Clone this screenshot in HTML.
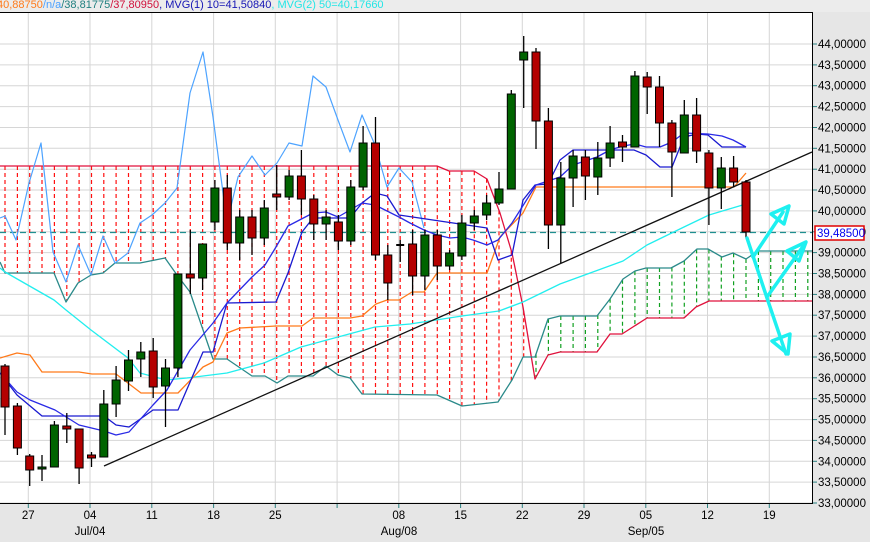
<!DOCTYPE html>
<html><head><meta charset="utf-8">
<style>
html,body{margin:0;padding:0;background:#e6e6e6;}
body{width:870px;height:542px;overflow:hidden;position:relative;font-family:"Liberation Sans",sans-serif;}
#hdr{position:absolute;left:-3px;top:-1px;font-size:11px;white-space:nowrap;line-height:13px;}
svg{position:absolute;left:0;top:0;}
</style></head>
<body>
<svg id="s" width="870" height="542" xmlns="http://www.w3.org/2000/svg" font-family="Liberation Sans, sans-serif">
<rect x="0" y="0" width="870" height="542" fill="#e6e6e6"/>
<rect x="0" y="0" width="870" height="12" fill="#ececec"/>
<rect x="0" y="13" width="812" height="490" fill="#ffffff"/>
<g id="grid" stroke="#d6d6d6" stroke-width="1"></g>
<g id="cloud"></g>
<g id="lines" fill="none" stroke-linejoin="round"></g>
<g id="candles"></g>
<g id="arrows" fill="none" stroke="#1ef0f0" stroke-width="3.5" stroke-linejoin="round" stroke-linecap="round">
<polyline points="747,238 757,268 767,298 786,354"/>
<polyline points="753,257 783,212"/>
<polygon points="771,214 789,206 784,224"/>
<polyline points="767,297 804,245"/>
<polygon points="787,251 806,242 799,261"/>
<polygon points="772,341 790,334 788,354"/>
</g>
<line x1="0" y1="12.5" x2="812" y2="12.5" stroke="#000"/>
<line x1="812.5" y1="12" x2="812.5" y2="503" stroke="#000"/>
<line x1="0" y1="503.5" x2="813" y2="503.5" stroke="#000"/>
<g id="axis" font-size="11.5" fill="#000"></g>
<rect x="815" y="226" width="49" height="14" fill="#fff" stroke="#e00000" stroke-width="1.5"/>
<text x="817" y="237" font-size="11.5" fill="#0000ee">39,48500</text>
</svg>
<div id="hdr"><span style="color:#ff7a1a">40,88750</span><span style="color:#4aa0ff">/n/a</span><span style="color:#1f7f7f">/38,81775</span><span style="color:#d0103a">/37,80950</span><span style="color:#1414b4">, MVG(1) 10=41,50840</span><span style="color:#22e6e6">, MVG(2) 50=40,17660</span></div>
<script>
var NS="http://www.w3.org/2000/svg";
function el(p,t,a){var e=document.createElementNS(NS,t);for(var k in a)e.setAttribute(k,a[k]);p.appendChild(e);return e;}
var g=document.getElementById('grid'),ax=document.getElementById('axis');
for(var k=0;k<=22;k++){var y=44+k*20.864;
 el(g,'line',{x1:0,y1:y.toFixed(1),x2:812,y2:y.toFixed(1)});
 el(ax,'line',{x1:813,y1:y.toFixed(1),x2:817,y2:y.toFixed(1),stroke:'#2a8080'});
 var v=(44-k*0.5).toFixed(5).replace('.',',');
 var t=el(ax,'text',{x:818,y:(y+4).toFixed(1)});t.textContent=v;
}
var days=["27","04","11","18","25","","08","15","22","29","05","12","19"];
for(var k=0;k<13;k++){var x=28.3+61.75*k;
 el(g,'line',{x1:x.toFixed(1),y1:13,x2:x.toFixed(1),y2:503});
 el(ax,'line',{x1:x.toFixed(1),y1:504,x2:x.toFixed(1),y2:508,stroke:'#2a8080'});
 if(days[k]){var t=el(ax,'text',{x:x.toFixed(1),y:519,'text-anchor':'middle'});t.textContent=days[k];}
}
[["Jul/04",90],["Aug/08",399],["Sep/05",646]].forEach(function(m){var t=el(ax,'text',{x:m[1],y:535,'text-anchor':'middle'});t.textContent=m[0];});
function interp(P,x){for(var i=0;i<P.length-1;i++){if(x>=P[i][0]&&x<=P[i+1][0]){var f=(x-P[i][0])/((P[i+1][0]-P[i][0])||1);return P[i][1]+f*(P[i+1][1]-P[i][1]);}}return P[P.length-1][1];}
var crim=[[0,166],[437,166],[449,171],[474,171],[487,179],[500,213],[512,253],[523,307],[535,379],[548,355],[560,352],[597,352],[610,334],[622,334],[647,318],[684,318],[696,307],[709,301],[812,301]];
var teal=[[0,262],[5,273],[54,273],[66,302],[78,283],[91,275],[103,273],[115,263],[140,263],[165,258],[177,275],[190,292],[213,359],[227,359],[252,376],[265,376],[277,383],[288,376],[313,376],[326,366],[338,375],[350,378],[362,394],[437,395],[462,406],[498,402],[512,380],[523,357],[535,357],[548,319],[560,316],[597,316],[610,299],[623,279],[635,271],[646,268],[671,268],[684,261],[697,249],[708,249],[722,257],[733,253],[746,259],[758,251],[812,251]];
var cl=document.getElementById('cloud');
for(var i=0;i<=65;i++){var x=5+12.35*i;var a=interp(crim,x),b=interp(teal,x);
 el(cl,'line',{x1:x.toFixed(1),y1:Math.min(a,b).toFixed(1),x2:x.toFixed(1),y2:Math.max(a,b).toFixed(1),stroke:(a<b?'#ff1010':'#10a020'),'stroke-width':1.2,'stroke-dasharray':'4,3'});}
var L=document.getElementById('lines');
function pl(P,c,w,d){var s=P.map(function(p){return p[0]+','+p[1]}).join(' ');var o={points:s,stroke:c,'stroke-width':w||1.2};if(d)o['stroke-dasharray']=d;el(L,'polyline',o);}
el(L,'line',{x1:0,y1:232.5,x2:812,y2:232.5,stroke:'#1f8f8f','stroke-width':1.3,'stroke-dasharray':'6,4'});
pl(crim,'#e0103c',1.3);
pl(teal,'#2a8a8a',1.3);
pl([[0,218],[5,216],[16,240],[29,183],[41,143],[53,252],[66,282],[78,245],[91,275],[103,236],[115,263],[128,253],[140,223],[152,215],[165,203],[177,188],[190,93],[203,52],[213,117],[227,223],[238,177],[252,156],[265,175],[277,163],[289,143],[302,146],[313,76],[326,87],[338,120],[350,152],[362,115],[375,145],[387,187],[399,168],[412,182],[424,228]],'#4da3ff',1.2);
pl([[0,268],[5,272],[54,300],[66,310],[91,330],[128,358],[140,373],[166,380],[187,378],[227,373],[264,363],[301,347],[338,337],[375,327],[410,324],[462,316],[499,311],[523,302],[560,284],[623,261],[647,245],[684,227],[709,215],[746,204]],'#22eeee',1.3);
pl([[0,358],[17,353],[30,355],[42,372],[79,372],[92,374],[116,374],[141,393],[178,393],[203,367],[213,362],[227,333],[240,328],[276,326],[302,326],[313,318],[350,318],[362,316],[376,304],[387,300],[399,300],[412,292],[424,292],[437,273],[487,273],[500,237],[523,213],[536,187],[734,187],[746,173]],'#ff7a1a',1.3);
pl([[0,373],[17,395],[42,416],[104,416],[116,425],[129,427],[153,410],[178,410],[203,352],[213,352],[227,303],[276,302],[288,273],[302,232],[313,218],[350,218],[362,203],[375,193],[387,196],[399,215],[487,228],[498,260],[512,255],[523,200],[535,185],[548,184],[560,160],[573,150],[634,150],[646,155],[660,167],[672,167],[684,137],[697,134],[708,135],[722,147],[746,147]],'#1a1ad0',1.3);
pl([[0,373],[17,392],[30,400],[55,410],[79,425],[104,431],[116,435],[129,432],[153,405],[167,390],[190,350],[213,323],[227,303],[252,277],[265,265],[276,247],[288,226],[313,213],[326,212],[338,217],[362,203],[375,205],[399,217],[410,223],[424,230],[437,235],[450,238],[462,237],[473,240],[487,245],[498,240],[512,223],[536,185],[560,177],[573,165],[597,157],[610,150],[623,146],[635,144],[646,147],[660,147],[672,142],[684,133],[708,134],[722,136],[733,140],[746,147]],'#2a2ae6',1.3);
el(L,'line',{x1:104,y1:466,x2:812,y2:152,stroke:'#111','stroke-width':1.3});
var C=[
['r',366,407,364,435],['r',406,448,403,455],['r',456,470,454,486],['g',467,469,455,481],['g',425,467,421,467],
['r',426,429,413,443],['r',429,468,429,484],['r',455,458,452,467],['g',404,457,390,457],['g',380,404,366,417],
['g',360,381,350,391],['g',352,359,342,377],['r',351,387,338,398],['g',368,386,359,427],['g',274,368,274,377],
['r',274,278,230,294],['g',244,278,244,290],['g',188,222,180,230],['r',188,243,175,250],['g',217,243,210,260],
['r',217,238,210,255],['g',208,238,200,245],['r',194,197,165,210],['g',176,197,170,200],['r',176,199,150,215],
['r',199,224,195,240],['g',217,224,210,240],['r',222,241,215,250],['g',187,241,180,245],['g',143,187,126,190],
['r',143,255,117,260],['r',255,283,245,300],['d',245,246,240,262],['r',244,276,230,295],['g',235,276,230,290],
['r',235,266,230,280],['g',253,266,250,270],['g',223,256,215,260],['g',216,223,210,230],['g',203,215,195,220],
['g',189,203,172,205],['g',94,189,90,189],['g',52,60,36,108],['r',52,121,48,149],['r',121,225,108,249],
['g',178,225,162,263],['g',156,178,150,207],['r',157,176,150,200],['g',158,177,142,195],['g',143,158,126,167],
['r',142,147,135,162],['g',76,147,71,147],['r',77,87,72,114],['r',87,123,76,147],['r',123,152,120,197],
['g',115,153,100,153],['r',115,151,98,163],['r',153,188,150,225],['g',168,188,157,209],['r',168,182,156,187],
['r',182,232,180,238]];
var cg=document.getElementById('candles');
C.forEach(function(c,i){var x=5+12.35*i;
 el(cg,'line',{x1:x.toFixed(1),y1:c[3],x2:x.toFixed(1),y2:c[4],stroke:'#000','stroke-width':1.3});
 if(c[0]=='d'){el(cg,'line',{x1:(x-4).toFixed(1),y1:c[1],x2:(x+4).toFixed(1),y2:c[1],stroke:'#000','stroke-width':2});return;}
 el(cg,'rect',{x:(x-4).toFixed(1),y:c[1],width:8,height:Math.max(c[2]-c[1],2),fill:(c[0]=='g'?'#006400':'#b40000'),stroke:'#000','stroke-width':1});
});
</script>
</body></html>
